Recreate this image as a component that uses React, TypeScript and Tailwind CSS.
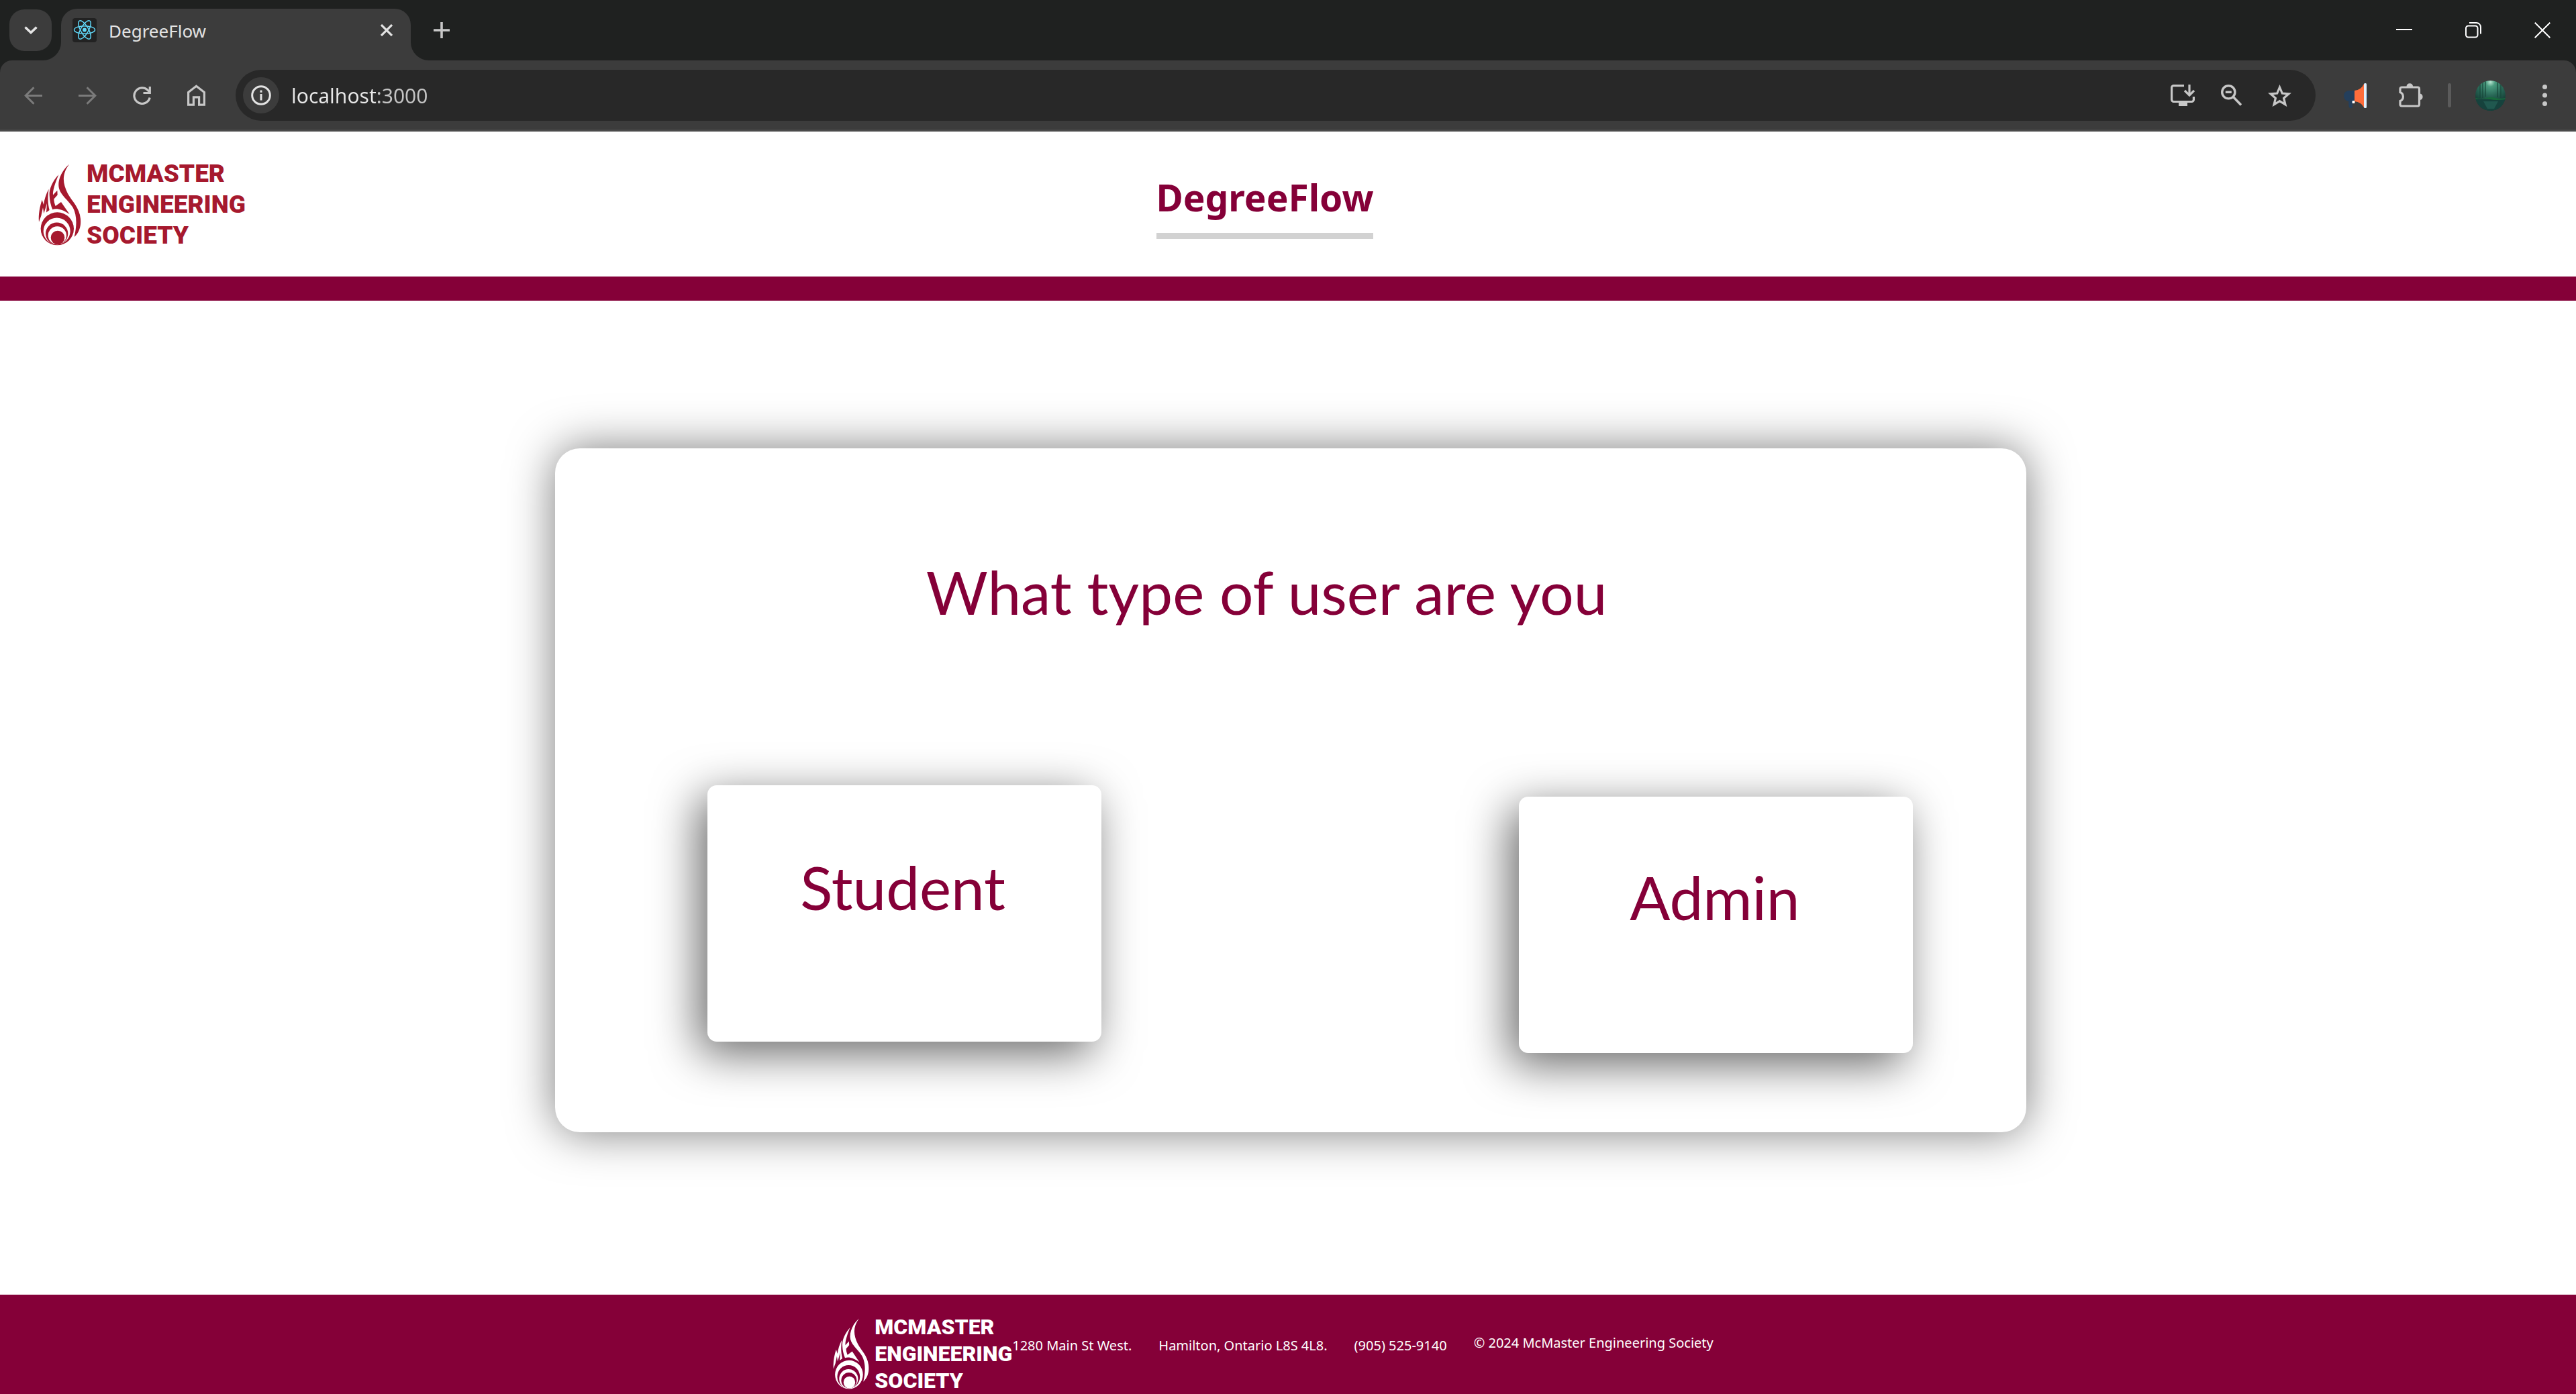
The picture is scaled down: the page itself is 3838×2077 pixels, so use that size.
import type { ReactNode } from 'react';

function IconButton({ label, className, children }: { label: string; className?: string; children: ReactNode }) {
  return (
    <button type="button" aria-label={label} className={'flex shrink-0 items-center justify-center ' + (className ?? '')}>
      {children}
    </button>
  );
}

function Flame({ className, cutout }: { className: string; cutout: string }) {
  return (
    <svg viewBox="20 28 192 368" preserveAspectRatio="none" className={'shrink-0 fill-current ' + className} aria-hidden="true">
      <path d="M158 30C130 55 110 90 111 125C112 165 155 190 175 225C192 258 194 300 181 357C205 335 212 305 209 275C205 225 170 195 152 162C128 115 125 75 158 30Z" />
      <path d="M111 77C85 105 68 140 70 170C71 195 76 215 84 234C98 228 125 230 160 255L122 200L97 218C92 205 90 195 90 186L106 168L105 148L86 168C84 150 95 115 111 77Z" />
      <path d="M37 190C27 220 20 255 23 290L33 262L41 225L45 252L59 205L56 247L70 236C62 205 62 175 67 142C54 165 47 190 44 212Z" />
      <circle cx="105" cy="320" r="74" />
      <circle cx="103" cy="331" r="60" className={cutout} />
      <circle cx="103" cy="342" r="50" />
      <circle cx="105" cy="350" r="41" className={cutout} />
      <circle cx="107" cy="360" r="31" />
    </svg>
  );
}

function TabStrip() {
  return (
    <div className="flex h-[90px] items-start bg-[#1f2120] pl-[14px] pr-[38px]">
      <IconButton label="Search tabs" className="mt-[14px] h-[62px] w-[63px] rounded-[22px] bg-[#3c3c3c]">
        <svg className="h-3 w-5" viewBox="0 0 20 12" fill="none" stroke="#e3e3e3" strokeWidth="3.6"><path d="M1.5 1.5 10 9.5 18.5 1.5" /></svg>
      </IconButton>
      <div className="relative ml-[14px] mt-[13px] flex h-[77px] w-[521px] items-center rounded-t-3xl bg-[#3c3c3c] pb-[13px] pl-[17px] pr-[27px]">
        <svg className="absolute bottom-0 right-full size-[27px]" viewBox="0 0 27 27" fill="#3c3c3c" aria-hidden="true"><path d="M27 0V27H0A27 27 0 0 0 27 0Z" /></svg>
        <svg className="absolute bottom-0 left-full size-[27px]" viewBox="0 0 27 27" fill="#3c3c3c" aria-hidden="true"><path d="M0 0V27H27A27 27 0 0 1 0 0Z" /></svg>
        <svg className="size-9 shrink-0" viewBox="0 0 36 36" aria-hidden="true">
          <rect width="36" height="36" rx="4" fill="#222" />
          <g fill="none" stroke="#61dafb" strokeWidth="1.5">
            <ellipse cx="18" cy="17.5" rx="15.5" ry="5.8" />
            <ellipse cx="18" cy="17.5" rx="15.5" ry="5.8" transform="rotate(60 18 17.5)" />
            <ellipse cx="18" cy="17.5" rx="15.5" ry="5.8" transform="rotate(120 18 17.5)" />
          </g>
          <circle cx="18" cy="17.5" r="2.9" fill="#61dafb" />
        </svg>
        <span className="ml-[18px] flex-1 pt-px text-[26px] leading-9 text-[#e3e3e3]">DegreeFlow</span>
        <IconButton label="Close tab">
          <svg className="size-[18px]" viewBox="0 0 18 18" stroke="#e3e3e3" strokeWidth="3.2"><path d="M1 1 17 17M17 1 1 17" /></svg>
        </IconButton>
      </div>
      <IconButton label="New tab" className="ml-[34px] mt-[33px]">
        <svg className="size-6" viewBox="0 0 24 24" stroke="#c7c7c7" strokeWidth="3.6"><path d="M12 0V24M0 12H24" /></svg>
      </IconButton>
      <div className="ml-auto mt-[33px] flex gap-[79px]">
        <IconButton label="Minimize">
          <svg className="size-6" viewBox="0 0 24 24" stroke="#fff" strokeWidth="2"><path d="M0 11H24" /></svg>
        </IconButton>
        <IconButton label="Restore">
          <svg className="size-6" viewBox="0 0 24 24" fill="none" stroke="#fff" strokeWidth="2"><rect x="1" y="5.5" width="17.5" height="17" rx="3.5" /><path d="M6 1H16.500A6.500 6.500 0 0 1 23 7.500V17.500" /></svg>
        </IconButton>
        <IconButton label="Close window">
          <svg className="size-6" viewBox="0 0 24 24" stroke="#fff" strokeWidth="2"><path d="M.7 .7 23.300 23.300M23.300 .7 .7 23.300" /></svg>
        </IconButton>
      </div>
    </div>
  );
}

function Toolbar() {
  return (
    <div className="bg-[#1f2120]">
      <div className="flex items-center rounded-t-[18px] border-b-[3px] border-[#4a4a4a] bg-[#3c3c3c] pb-[13px] pl-9 pr-[43px] pt-[14px]">
        <div className="flex items-center gap-[54px]">
          <IconButton label="Back">
            <svg className="size-[27px]" viewBox="0 0 27 27" fill="none" stroke="#7b7b7b" strokeWidth="3"><path d="M27 13.500H3M14.500 1.200 2.200 13.500 14.500 25.800" /></svg>
          </IconButton>
          <IconButton label="Forward">
            <svg className="size-[27px]" viewBox="0 0 27 27" fill="none" stroke="#7b7b7b" strokeWidth="3"><path d="M0 13.500H24M12.500 1.200 24.800 13.500 12.500 25.800" /></svg>
          </IconButton>
          <IconButton label="Reload">
            <svg className="size-[27px]" viewBox="0 0 27 27" fill="none" stroke="#c7c7c7" strokeWidth="3.2"><path d="M25.200 16.500A11.800 11.800 0 1 1 22.500 5.700L25 8.500M25.300 0V9.500H15.500" /></svg>
          </IconButton>
          <IconButton label="Home">
            <svg className="h-8 w-[27px]" viewBox="0 0 27 32" fill="none" stroke="#c7c7c7" strokeWidth="3.2"><path d="M1.600 11.500 13.500 2.200 25.400 11.500V30.200H17.600V18.800H9.400V30.200H1.600Z" /></svg>
          </IconButton>
        </div>
        <div className="ml-[45px] flex h-[76px] flex-1 items-center rounded-full bg-[#282828] pl-[11px] pr-9">
          <IconButton label="Site information" className="size-[54px] rounded-full bg-[#3c3c3c]">
            <svg className="size-[30px]" viewBox="0 0 30 30" fill="none" stroke="#e3e3e3" strokeWidth="3"><circle cx="15" cy="15" r="13.300" /><path d="M15 13V22.500M15 7.500V10.700" /></svg>
          </IconButton>
          <input
            aria-label="Address"
            defaultValue="localhost:3000"
            className="ml-[18px] min-w-0 flex-1 bg-[linear-gradient(90deg,#e8e8e8_129px,#c4c4c4_129px)] bg-clip-text pt-px text-[30px] leading-10 text-transparent outline-none"
          />
          <div className="flex items-center gap-[39px]">
            <IconButton label="Install app">
              <svg className="h-8 w-9" viewBox="0 0 36 32" fill="none" stroke="#c7c7c7" strokeWidth="3.2"><path d="M20 1.600H4.600A3 3 0 0 0 1.600 4.600V22.500A3 3 0 0 0 4.600 25.500H31.400A3 3 0 0 0 34.400 22.500V18M28 0V15.500M21 9 28 16 35 9" /><path d="M12 26H25V32H12Z" fill="#c7c7c7" stroke="none" /></svg>
            </IconButton>
            <IconButton label="Zoom">
              <svg className="h-8 w-[31px]" viewBox="0 0 31 32" fill="none" stroke="#c7c7c7" strokeWidth="3.400"><circle cx="11.300" cy="11.300" r="9.600" /><path d="M6.800 11.300H15.800M18.200 18.200 30 30.500" /></svg>
            </IconButton>
            <IconButton label="Bookmark this tab">
              <svg className="h-[33px] w-[35px]" viewBox="0 0 35 33" fill="none" stroke="#c7c7c7" strokeWidth="3.200"><path d="M17.500 4 21.300 13 31 13.800 23.600 20.200 25.900 29.700 17.500 24.600 9.100 29.700 11.400 20.200 4 13.800 13.700 13Z" /></svg>
            </IconButton>
          </div>
        </div>
        <IconButton label="Announcements extension" className="ml-[42px]">
          <svg className="h-[37px] w-9" viewBox="0 0 36 37">
            <path d="M16 11H8A8 8 0 0 0 8 27H16Z" fill="#243f5c" />
            <path d="M7 25H13V35A2 2 0 0 1 11 37H10Q8 37 7.500 34Z" fill="#243f5c" />
            <rect x="33" y="16" width="3" height="6" rx="1.500" fill="#243f5c" />
            <path d="M16 11Q26 10 30 1V36Q26 28 16 27Z" fill="#ff6d3b" />
            <rect x="30" width="4" height="37" rx="1.500" fill="#dff0ff" />
            <rect x="12.500" y="26" width="4" height="4" rx="1" fill="#fff" />
          </svg>
        </IconButton>
        <IconButton label="Extensions" className="ml-[46px]">
          <svg className="h-9 w-[37px]" viewBox="0 0 37 36" fill="none" stroke="#c7c7c7" strokeWidth="3.200">
            <path d="M4.500 6H28A2.500 2.500 0 0 1 30.500 8.500V31.500A2.500 2.500 0 0 1 28 34H4.500A2.500 2.500 0 0 1 2 31.500V26.500A7 7 0 0 0 2 13.500V8.500A2.500 2.500 0 0 1 4.500 6Z" />
            <path d="M11.500 5A4.800 4.800 0 0 1 21.100 5ZM31.500 15.500A4.800 4.800 0 0 1 31.500 25Z" fill="#c7c7c7" stroke="none" />
          </svg>
        </IconButton>
        <span className="ml-9 h-9 w-[5px] rounded-full bg-[#5b5b5b]" />
        <IconButton label="Profile" className="ml-9">
          <svg className="size-[45px]" viewBox="0 0 45 45">
            <defs>
              <clipPath id="avatar-disc"><circle cx="22.500" cy="22.500" r="22.500" /></clipPath>
              <radialGradient id="avatar-glow" cx=".5" cy=".05" r=".75"><stop offset="0" stopColor="#b9e6d2" /><stop offset=".2" stopColor="#4b9c80" /><stop offset=".6" stopColor="#286756" /><stop offset="1" stopColor="#143d35" /></radialGradient>
            </defs>
            <g clipPath="url(#avatar-disc)">
              <rect width="45" height="45" fill="url(#avatar-glow)" />
              <path d="M0 28H45V45H0Z" fill="#16423d" />
              <path d="M12 31H34L28 42H18Z" fill="#20584f" />
              <path d="M0 26Q8 28 16 26T30 26T45 26V28Q30 30 22 28T0 28Z" fill="#176b3c" />
              <path d="M11 0V26M15 0V24M7 6V26M33 3V25M38 6V26" stroke="#164538" strokeWidth="1.200" />
            </g>
          </svg>
        </IconButton>
        <IconButton label="Menu" className="ml-[55px]">
          <svg className="h-8 w-[7px]" viewBox="0 0 7 32" fill="#c7c7c7"><circle cx="3.500" cy="3.500" r="3.500" /><circle cx="3.500" cy="16" r="3.500" /><circle cx="3.500" cy="28.500" r="3.500" /></svg>
        </IconButton>
      </div>
    </div>
  );
}

function UserTypeButton({ label, className }: { label: string; className: string }) {
  return (
    <button
      type="button"
      className={
        "flex h-[382px] w-[587px] items-start justify-center rounded-[14px] bg-white pr-1 font-['Lato',sans-serif] text-[89px] leading-[107px] shadow-[-13px_17px_68px_rgba(0,0,0,0.6)] " +
        className
      }
    >
      {label}
    </button>
  );
}

export default function App() {
  return (
    <div className="flex min-h-screen flex-col bg-white font-['Noto_Sans',sans-serif]">
      <TabStrip />
      <Toolbar />

      <header className="grid grid-cols-[1fr_auto_1fr] items-start border-b-[36px] border-[#850038] pb-[38px] pl-[57px] pr-[126px] pt-10">
        <a href="#home" className="flex items-center gap-2 text-[#a6192e]">
          <Flame className="h-[122px] w-16" cutout="fill-white" />
          <span className="font-['Roboto',sans-serif] text-[37px] font-black leading-[46px]">
            MCMASTER<br />ENGINEERING<br />SOCIETY
          </span>
        </a>
        <h1 className="mt-5 border-b-[9px] border-[#d2d2d2] pb-4 text-[55px] font-bold leading-[75px] text-[#850038]">DegreeFlow</h1>
      </header>

      <main className="flex flex-1 items-start justify-center pb-[242px] pl-2 pt-[220px] text-[#850038]">
        <section className="w-[57.25%] rounded-[37px] bg-white pb-[118px] pt-40 shadow-[0_0_68px_rgba(0,0,0,0.52)]">
          <h2 className="pr-[72px] text-center font-['Lato',sans-serif] text-[89px] leading-[107px]">What type of user are you</h2>
          <div className="mt-[235px] flex items-start justify-between pl-[227px] pr-[169px]">
            <UserTypeButton label="Student" className="pt-[98px]" />
            <UserTypeButton label="Admin" className="mt-[17px] pt-24" />
          </div>
        </section>
      </main>

      <footer className="flex items-start justify-center bg-[#850038] pr-11 pt-7 text-xl leading-7 text-white">
        <div className="flex items-center gap-2">
          <Flame className="h-[106px] w-[54px]" cutout="fill-[#850038]" />
          <span className="font-['Roboto',sans-serif] text-[32px] font-black leading-10">
            MCMASTER<br />ENGINEERING<br />SOCIETY
          </span>
        </div>
        <address className="mt-[34px] flex gap-10 not-italic">
          <span>1280 Main St West.</span>
          <span>Hamilton, Ontario L8S 4L8.</span>
          <span>(905) 525-9140</span>
        </address>
        <p className="ml-10 mt-[30px]">© 2024 McMaster Engineering Society</p>
      </footer>
    </div>
  );
}
